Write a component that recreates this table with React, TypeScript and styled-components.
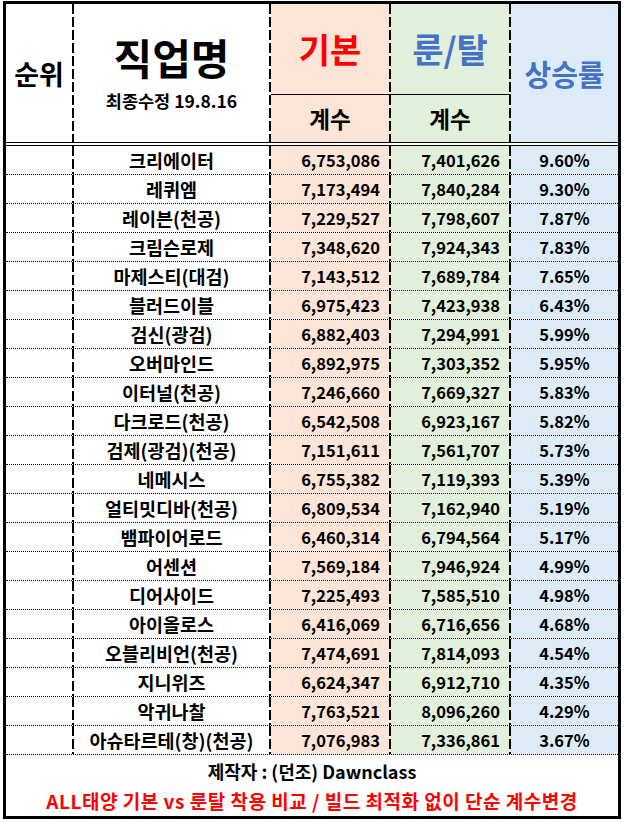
import React from 'react'
import styled, { createGlobalStyle, css } from 'styled-components'

const GlobalStyle = createGlobalStyle`
  body {
    margin: 0;
    background: #fff;
    font-family: "Noto Sans CJK KR", "Noto Sans", sans-serif;
  }
`

const COLS = '68px 197px 120px 120px 107px'
const PEACH = '#fce4d6'
const GREEN = '#e2efda'
const BLUE = '#ddebf7'

// Excel-style "medium dashed" right edge: long dashes, short gaps
const cellFill = (bg: string, last?: boolean) =>
  last
    ? css`background: ${bg};`
    : css`
        background:
          repeating-linear-gradient(to bottom, #000 0 10px, transparent 10px 13px) right top / 2px 100% no-repeat,
          ${bg};
        padding-right: 2px;
      `

const Sheet = styled.div`
  box-sizing: border-box;
  width: 618px;
  height: 818px;
  margin: 1px 0 0 3px;
  border: 3px solid #000;
  display: flex;
  flex-direction: column;
`
const Header = styled.div`
  display: grid;
  grid-template-columns: ${COLS};
  grid-template-rows: 90px 48px;
  border-bottom: 4px double #000;
`
const HeadCell = styled.div<{ $bg?: string; $col: number; $row?: string; $last?: boolean }>`
  box-sizing: border-box;
  ${p => cellFill(p.$bg || '#fff', p.$last)}
  grid-column: ${p => p.$col};
  grid-row: ${p => p.$row || '1'};
  display: flex;
  flex-direction: column;
  align-items: center;
  justify-content: center;
  font-weight: 700;
`
const SubCell = styled(HeadCell)`
  border-top: 1px solid #000;
`
const Rank = styled.div`
  font-size: 27px;
  line-height: 1;
`
const JobTitle = styled.div`
  font-size: 42px;
  line-height: 1;
`
const Updated = styled.div`
  font-size: 17.5px;
  margin-top: 14px;
  line-height: 1;
`
const ColTitle = styled.div<{ $color: string; $size: number }>`
  color: ${p => p.$color};
  font-size: ${p => p.$size}px;
  line-height: 1;
`
const Body = styled.div`
  display: flex;
  flex-direction: column;
`
const Row = styled.div`
  display: grid;
  grid-template-columns: ${COLS};
  height: 29px;
  box-sizing: border-box;
  border-bottom: 1px dotted #000;
  font-size: 16.5px;
  font-weight: 700;
`
const Cell = styled.div<{ $bg?: string; $right?: boolean; $last?: boolean }>`
  box-sizing: border-box;
  ${p => cellFill(p.$bg || '#fff', p.$last)}
  display: flex;
  align-items: center;
  justify-content: ${p => (p.$right ? 'flex-end' : 'center')};
  ${p => p.$right && css`padding-right: 11px;`}
  line-height: 1;
`
const NameCell = styled(Cell)`
  font-size: 18.5px;
`
const Footer = styled.div`
  flex: 1;
  display: flex;
  flex-direction: column;
  align-items: center;
  justify-content: center;
  gap: 11px;
  font-weight: 700;
  line-height: 1;
`
const Credit = styled.div`
  color: #000;
  font-size: 18px;
`
const Note = styled.div`
  color: #ff0000;
  font-size: 19px;
  letter-spacing: 0.5px;
`

const data: [string, string, string, string][] = [
  ['크리에이터', '6,753,086', '7,401,626', '9.60%'],
  ['레퀴엠', '7,173,494', '7,840,284', '9.30%'],
  ['레이븐(천공)', '7,229,527', '7,798,607', '7.87%'],
  ['크림슨로제', '7,348,620', '7,924,343', '7.83%'],
  ['마제스티(대검)', '7,143,512', '7,689,784', '7.65%'],
  ['블러드이블', '6,975,423', '7,423,938', '6.43%'],
  ['검신(광검)', '6,882,403', '7,294,991', '5.99%'],
  ['오버마인드', '6,892,975', '7,303,352', '5.95%'],
  ['이터널(천공)', '7,246,660', '7,669,327', '5.83%'],
  ['다크로드(천공)', '6,542,508', '6,923,167', '5.82%'],
  ['검제(광검)(천공)', '7,151,611', '7,561,707', '5.73%'],
  ['네메시스', '6,755,382', '7,119,393', '5.39%'],
  ['얼티밋디바(천공)', '6,809,534', '7,162,940', '5.19%'],
  ['뱀파이어로드', '6,460,314', '6,794,564', '5.17%'],
  ['어센션', '7,569,184', '7,946,924', '4.99%'],
  ['디어사이드', '7,225,493', '7,585,510', '4.98%'],
  ['아이올로스', '6,416,069', '6,716,656', '4.68%'],
  ['오블리비언(천공)', '7,474,691', '7,814,093', '4.54%'],
  ['지니위즈', '6,624,347', '6,912,710', '4.35%'],
  ['악귀나찰', '7,763,521', '8,096,260', '4.29%'],
  ['아슈타르테(창)(천공)', '7,076,983', '7,336,861', '3.67%'],
]

const App: React.FC = () => {
  return (
    <>
      <GlobalStyle />
      <Sheet>
        <Header>
          <HeadCell $col={1} $row="1 / span 2">
            <Rank>순위</Rank>
          </HeadCell>
          <HeadCell $col={2} $row="1 / span 2">
            <JobTitle>직업명</JobTitle>
            <Updated>최종수정 19.8.16</Updated>
          </HeadCell>
          <HeadCell $col={3} $bg={PEACH}>
            <ColTitle $color="#ff0000" $size={34}>기본</ColTitle>
          </HeadCell>
          <HeadCell $col={4} $bg={GREEN}>
            <ColTitle $color="#4472c4" $size={34}>룬/탈</ColTitle>
          </HeadCell>
          <HeadCell $col={5} $bg={BLUE} $row="1 / span 2" $last>
            <ColTitle $color="#4472c4" $size={29}>상승률</ColTitle>
          </HeadCell>
          <SubCell $col={3} $row="2" $bg={PEACH}>
            <ColTitle $color="#000" $size={22.5}>계수</ColTitle>
          </SubCell>
          <SubCell $col={4} $row="2" $bg={GREEN}>
            <ColTitle $color="#000" $size={22.5}>계수</ColTitle>
          </SubCell>
        </Header>
        <Body>
          {data.map(([name, base, rune, rate]) => (
            <Row key={name}>
              <Cell />
              <NameCell>{name}</NameCell>
              <Cell $bg={PEACH} $right>{base}</Cell>
              <Cell $bg={GREEN} $right>{rune}</Cell>
              <Cell $bg={BLUE} $last>{rate}</Cell>
            </Row>
          ))}
        </Body>
        <Footer>
          <Credit>제작자 : (던조) Dawnclass</Credit>
          <Note>ALL태양 기본 vs 룬탈 착용 비교 / 빌드 최적화 없이 단순 계수변경</Note>
        </Footer>
      </Sheet>
    </>
  )
}

export default App
